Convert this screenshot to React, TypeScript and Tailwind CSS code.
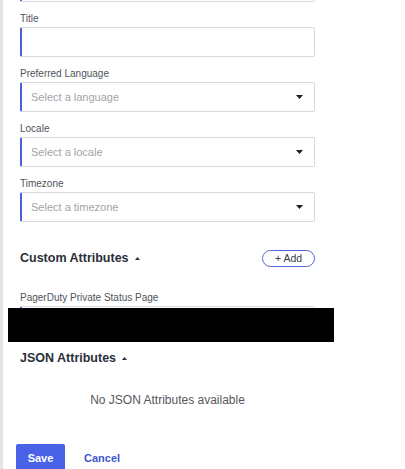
import React from "react";

const fieldBox =
  "h-[30px] w-full border border-[#d6d9de] border-l-2 border-l-[#4c5fd7] rounded-[2px] bg-white";

function Caret() {
  return (
    <svg width="7" height="4" viewBox="0 0 7 4" className="shrink-0">
      <path d="M0 0 L7 0 L3.5 4 Z" fill="#1d1f24" />
    </svg>
  );
}

function UpCaret() {
  return (
    <svg width="5" height="3" viewBox="0 0 5 3" className="ml-[6px] shrink-0">
      <path d="M0 3 L5 3 L2.5 0 Z" fill="#2b2f3a" />
    </svg>
  );
}

function Label({ text }: { text: string }) {
  return (
    <div className="h-[12px] leading-[13px] text-[10px] text-[#50535a] mb-[3px]">{text}</div>
  );
}

function SelectField({ label, placeholder }: { label: string; placeholder: string }) {
  return (
    <div className="mt-[10px]">
      <Label text={label} />
      <div className={fieldBox + " flex items-center justify-between pl-[9px] pr-[11px]"}>
        <span className="text-[11px] text-[#a2a4a8] pt-[1px]">{placeholder}</span>
        <Caret />
      </div>
    </div>
  );
}

export default function App() {
  return (
    <div className="relative flex w-[405px] h-[469px] overflow-hidden bg-white font-['Liberation_Sans',Arial,sans-serif]">
      <div className="w-[3px] shrink-0 bg-[#e3e4e8]" />
      <div className="flex-1 pl-[17px]">
        <div className="w-[295px]">
          <div className={fieldBox + " -mt-[28px]"} />

          <div className="mt-[10px]">
            <Label text="Title" />
            <div className={fieldBox} />
          </div>

          <SelectField label="Preferred Language" placeholder="Select a language" />
          <SelectField label="Locale" placeholder="Select a locale" />
          <SelectField label="Timezone" placeholder="Select a timezone" />

          <div className="mt-[27px] h-[18px] flex items-center justify-between">
            <div className="flex items-center text-[12.5px] font-bold text-[#2b2f3a]">
              Custom Attributes
              <UpCaret />
            </div>
            <button className="h-[17px] w-[53px] rounded-full border border-[#5667d3] text-[10.5px] text-[#3a3d44] leading-none">
              + Add
            </button>
          </div>

          <div className="mt-[24px]">
            <Label text="PagerDuty Private Status Page" />
            <div className={fieldBox} />
          </div>

          <div className="mt-[14px] h-[16px] flex items-center text-[12.5px] font-bold text-[#2b2f3a]">
            JSON Attributes
            <UpCaret />
          </div>

          <div className="mt-[27px] h-[14px] leading-[14px] text-center text-[12px] text-[#55585e]">
            No JSON Attributes available
          </div>
        </div>

        <div className="mt-[37px] -ml-[4px] flex items-center gap-[19px]">
          <button className="h-[28px] w-[49px] bg-[#4a63e6] text-white text-[11px] font-bold rounded-[2px]">
            Save
          </button>
          <span className="text-[11px] font-bold text-[#3f57cf]">Cancel</span>
        </div>
      </div>

      <div className="absolute left-[8px] top-[308px] w-[326px] h-[34px] bg-black" />
    </div>
  );
}
